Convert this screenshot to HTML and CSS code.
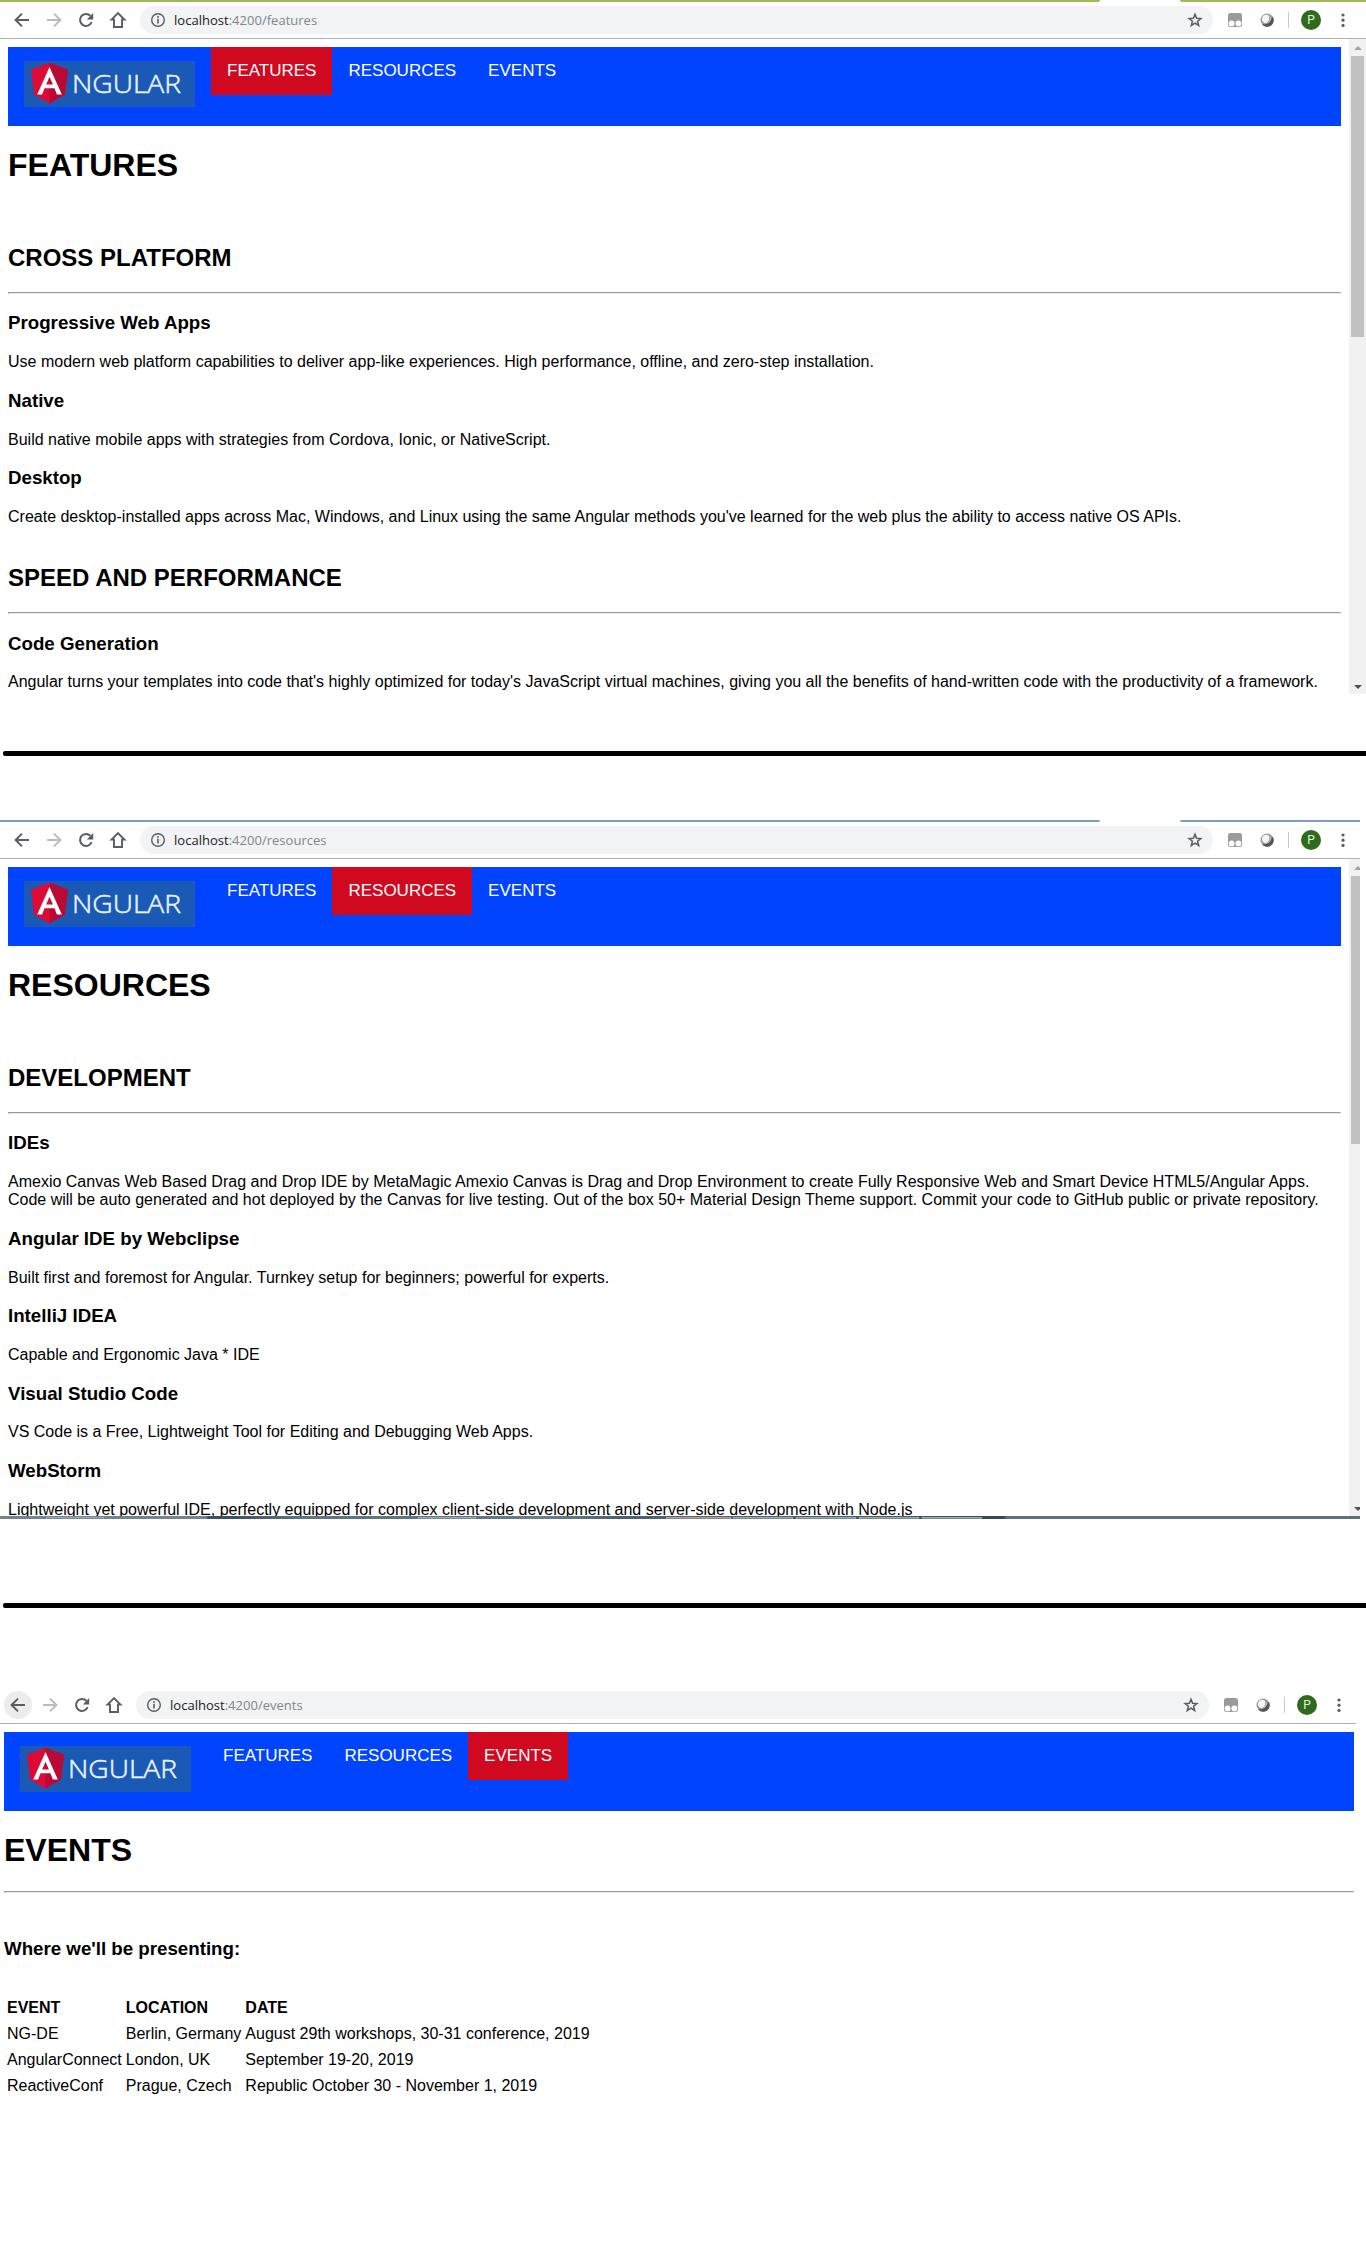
FILE: index.html
```html
<!DOCTYPE html>
<html lang="en">
<head>
<meta charset="utf-8">
<title>Angular</title>
<link rel="stylesheet" href="styles.css">
</head>
<body>
<svg class="defs" width="0" height="0">
  <defs>
    <symbol id="back" viewBox="0 0 28 28"><path d="M21 14H8M14 7.600L7.600 14l6.400 6.400" fill="none" stroke="currentColor" stroke-width="2"/></symbol>
    <symbol id="forward" viewBox="0 0 28 28"><path d="M7 14h13M14 7.600l6.400 6.400-6.400 6.400" fill="none" stroke="currentColor" stroke-width="2"/></symbol>
    <symbol id="reload" viewBox="0 0 28 28"><path d="M19.600 16.200A6 6 0 1 1 18.400 9.800" fill="none" stroke="currentColor" stroke-width="2"/><path d="M21.200 7v6.400h-6.400z" fill="currentColor"/></symbol>
    <symbol id="home" viewBox="0 0 28 28"><path d="M14 7.200L7.600 13.600H10V21h8v-7.400h2.400z" fill="none" stroke="currentColor" stroke-width="1.900"/></symbol>
    <symbol id="info" viewBox="0 0 28 28"><circle cx="14" cy="14" r="6.300" fill="none" stroke="currentColor" stroke-width="1.400"/><path d="M14 12.800v4.800M14 10v1.700" stroke="currentColor" stroke-width="1.600"/></symbol>
    <symbol id="star" viewBox="0 0 28 28"><path d="M14 8.200l1.600 4 4.300.300-3.300 2.800 1.100 4.200-3.700-2.300-3.700 2.300 1.100-4.200-3.300-2.800 4.300-.300z" fill="none" stroke="currentColor" stroke-width="1.500"/></symbol>
    <symbol id="mask" viewBox="0 0 28 28"><rect x="7" y="7" width="14" height="14" rx="2.500" fill="#9b9b9b"/><circle cx="10.600" cy="17.400" r="2.900" fill="#fff"/><circle cx="17.400" cy="17.400" r="2.900" fill="#fff"/></symbol>
    <symbol id="ball" viewBox="0 0 28 28"><circle cx="14" cy="14" r="6.500" fill="#999"/><path d="M19.500 10.500A6.500 6.500 0 0 1 9 18.200c5 .8 9-2.500 10.500-7.700z" fill="#555"/><circle cx="13.200" cy="13" r="4.300" fill="#f5f5f5"/><path d="M16 9.800a4.300 4.300 0 0 1-4 7.400c3-.4 4.700-3 4-7.400z" fill="#aaa"/></symbol>
    <symbol id="dots" viewBox="0 0 28 28"><g fill="currentColor"><circle cx="14" cy="9" r="1.600"/><circle cx="14" cy="14.200" r="1.600"/><circle cx="14" cy="19.400" r="1.600"/></g></symbol>
    <symbol id="logo" viewBox="0 0 171 46">
      <rect width="171" height="46" fill="#1a5ab4"/>
      <path d="M25.500 1.800L44 8.400l-3 25.200-15.500 8.800L10 33.600 7 8.400z" fill="#dd0a35"/>
      <path d="M25.500 1.800L44 8.400l-3 25.200-15.500 8.800z" fill="#b80a35"/>
      <path d="M25.500 6L13.200 33.500h4.900l2.400-6.200h10l2.400 6.200h4.900zm0 9.800l3.400 7.800h-6.800z" fill="#fff"/>
      <text x="48" y="32" class="logo-text" textLength="109" lengthAdjust="spacingAndGlyphs">NGULAR</text>
    </symbol>
  </defs>
</svg>

<section class="window window-features">
  <div class="tabstrip"><i></i><i></i></div>
  <div class="toolbar">
    <svg class="icon"><use href="#back"/></svg>
    <svg class="icon disabled"><use href="#forward"/></svg>
    <svg class="icon"><use href="#reload"/></svg>
    <svg class="icon"><use href="#home"/></svg>
    <div class="omnibox"><svg class="icon"><use href="#info"/></svg><span class="url">localhost<span>:4200/features</span></span><svg class="icon star"><use href="#star"/></svg></div>
    <svg class="icon"><use href="#mask"/></svg>
    <svg class="icon"><use href="#ball"/></svg>
    <div class="divider"></div>
    <div class="avatar">P</div>
    <svg class="icon"><use href="#dots"/></svg>
  </div>
  <div class="viewport">
    <main class="page">
      <nav class="nav"><svg class="logo"><use href="#logo"/></svg><a class="active">FEATURES</a><a>RESOURCES</a><a>EVENTS</a></nav>
      <h1>FEATURES</h1>
      <div class="group">
        <h2>CROSS PLATFORM</h2>
        <hr>
        <h3>Progressive Web Apps</h3>
        <p>Use modern web platform capabilities to deliver app-like experiences. High performance, offline, and zero-step installation.</p>
        <h3>Native</h3>
        <p>Build native mobile apps with strategies from Cordova, Ionic, or NativeScript.</p>
        <h3>Desktop</h3>
        <p>Create desktop-installed apps across Mac, Windows, and Linux using the same Angular methods you've learned for the web plus the ability to access native OS APIs.</p>
      </div>
      <div class="group">
        <h2>SPEED AND PERFORMANCE</h2>
        <hr>
        <h3>Code Generation</h3>
        <p>Angular turns your templates into code that's highly optimized for today's JavaScript virtual machines, giving you all the benefits of hand-written code with the productivity of a framework.</p>
      </div>
    </main>
    <div class="scrollbar"><b class="up"></b><div class="thumb"></div><b class="down"></b></div>
  </div>
</section>

<div class="separator first"></div>

<section class="window window-resources">
  <div class="tabstrip"><i></i><i></i></div>
  <div class="toolbar">
    <svg class="icon"><use href="#back"/></svg>
    <svg class="icon disabled"><use href="#forward"/></svg>
    <svg class="icon"><use href="#reload"/></svg>
    <svg class="icon"><use href="#home"/></svg>
    <div class="omnibox"><svg class="icon"><use href="#info"/></svg><span class="url">localhost<span>:4200/resources</span></span><svg class="icon star"><use href="#star"/></svg></div>
    <svg class="icon"><use href="#mask"/></svg>
    <svg class="icon"><use href="#ball"/></svg>
    <div class="divider"></div>
    <div class="avatar">P</div>
    <svg class="icon"><use href="#dots"/></svg>
  </div>
  <div class="viewport">
    <main class="page">
      <nav class="nav"><svg class="logo"><use href="#logo"/></svg><a>FEATURES</a><a class="active">RESOURCES</a><a>EVENTS</a></nav>
      <h1>RESOURCES</h1>
      <div class="group">
        <h2>DEVELOPMENT</h2>
        <hr>
        <h3>IDEs</h3>
        <p>Amexio Canvas Web Based Drag and Drop IDE by MetaMagic Amexio Canvas is Drag and Drop Environment to create Fully Responsive Web and Smart Device HTML5/Angular Apps.<br>Code will be auto generated and hot deployed by the Canvas for live testing. Out of the box 50+ Material Design Theme support. Commit your code to GitHub public or private repository.</p>
        <h3>Angular IDE by Webclipse</h3>
        <p>Built first and foremost for Angular. Turnkey setup for beginners; powerful for experts.</p>
        <h3>IntelliJ IDEA</h3>
        <p>Capable and Ergonomic Java * IDE</p>
        <h3>Visual Studio Code</h3>
        <p>VS Code is a Free, Lightweight Tool for Editing and Debugging Web Apps.</p>
        <h3>WebStorm</h3>
        <p>Lightweight yet powerful IDE, perfectly equipped for complex client-side development and server-side development with Node.js</p>
      </div>
    </main>
    <div class="scrollbar"><b class="up"></b><div class="thumb"></div><b class="down"></b></div>
  </div>
  <div class="taskbar"><i class="t1"></i><i class="t2"></i><i class="t3"></i><i class="t4"></i><i class="t4"></i><i class="t4"></i><i class="t4"></i></div>
</section>

<div class="separator second"></div>

<section class="window window-events">
  <div class="toolbar">
    <svg class="icon hover"><use href="#back"/></svg>
    <svg class="icon disabled"><use href="#forward"/></svg>
    <svg class="icon"><use href="#reload"/></svg>
    <svg class="icon"><use href="#home"/></svg>
    <div class="omnibox"><svg class="icon"><use href="#info"/></svg><span class="url">localhost<span>:4200/events</span></span><svg class="icon star"><use href="#star"/></svg></div>
    <svg class="icon"><use href="#mask"/></svg>
    <svg class="icon"><use href="#ball"/></svg>
    <div class="divider"></div>
    <div class="avatar">P</div>
    <svg class="icon"><use href="#dots"/></svg>
  </div>
  <div class="viewport">
    <main class="page">
      <nav class="nav"><svg class="logo"><use href="#logo"/></svg><a>FEATURES</a><a>RESOURCES</a><a class="active">EVENTS</a></nav>
      <h1>EVENTS</h1>
      <hr>
      <h3 class="presenting">Where we'll be presenting:</h3>
      <table>
        <tr><th>EVENT</th><th>LOCATION</th><th>DATE</th></tr>
        <tr><td>NG-DE</td><td>Berlin, Germany</td><td>August 29th workshops, 30-31 conference, 2019</td></tr>
        <tr><td>AngularConnect</td><td>London, UK</td><td>September 19-20, 2019</td></tr>
        <tr><td>ReactiveConf</td><td>Prague, Czech</td><td>Republic October 30 - November 1, 2019</td></tr>
      </table>
    </main>
  </div>
</section>
</body>
</html>
```

FILE: styles.css
```css
* { box-sizing: border-box; }
body {
  margin: 0;
  height: 2244px;
  overflow: hidden;
  background: #fff;
  color: #000;
  font: 16px "Liberation Sans", Arial, sans-serif;
}
.defs { display: block; }

.window { display: flex; flex-direction: column; overflow: hidden; }
.window-features { height: 694px; --tab: #9bbb59; }
.window-resources { height: 699px; width: 1360px; --tab: #7d9fbe; }
.window-events { height: 500px; width: 1356px; }

.tabstrip { height: 2px; display: flex; gap: 80px; flex: none; }
.tabstrip i { flex: none; background: var(--tab); width: 1100px; border-bottom-right-radius: 3px 2px; }
.tabstrip i + i { width: 200px; border-radius: 0 0 0 3px; }

.toolbar {
  flex: none;
  width: 1366px;
  height: 37px;
  padding: 4px 0 0 8px;
  border-bottom: 1px solid #b2b2b2;
  display: flex;
  gap: 4px;
  color: #5a5d61;
}
.icon { width: 28px; height: 28px; flex: none; }
.disabled { color: #bbb; }
.hover { background: #ececec; border-radius: 50%; }
.omnibox {
  width: 1073px;
  height: 28px;
  margin: 0 4px;
  padding: 0 4px;
  border-radius: 14px;
  background: #f1f3f4;
  display: flex;
  align-items: center;
}
.url {
  margin-left: 2px;
  font: 13px/28px "Open Sans", sans-serif;
  letter-spacing: 0.02px;
  color: #202124;
}
.url span { color: #80868b; }
.star { margin-left: auto; }
.divider { width: 1px; height: 16px; margin: 6px 8px 0 3px; background: #c9c9c9; }
.avatar {
  width: 20px;
  height: 20px;
  margin: 4px 4px 0 0;
  border-radius: 50%;
  background: #2f6b1c;
  color: #e4f3df;
  font: 12px/20px Roboto, sans-serif;
  text-align: center;
}

.viewport { flex: 1; min-height: 0; display: flex; width: 1366px; overflow: hidden; }
.page { flex: none; width: 1349px; padding: 8px; }
.nav { height: 79px; padding-left: 16px; display: flex; background: #04f; }
.logo { width: 171px; height: 46px; margin: 14px 16px 0 0; }
.logo-text { font: 300 25px "Open Sans", sans-serif; fill: #e9f3ff; stroke: #e9f3ff; stroke-width: 0.5px; }
.nav a {
  height: 48px;
  padding: 14px 16px 0;
  font-size: 17px;
  line-height: 20px;
  color: #fff;
}
.nav .active { background: #d10920; }

h1 { margin: 21.44px 0; font-size: 32px; line-height: 37px; }
h2 { margin: 19.92px 0; font-size: 24px; line-height: 28px; }
h3 { margin: 18.72px 0; font-size: 18.72px; line-height: 22px; }
p { margin: 0; line-height: 18px; white-space: nowrap; }
hr { height: 2px; margin: 8px 0; border: 1px solid #9a9a9a; border-bottom-color: #e9e9e9; border-right-color: #e9e9e9; }
.group { padding-top: 18px; }

.scrollbar {
  width: 17px;
  background: #f1f1f1;
  display: flex;
  flex-direction: column;
  align-items: center;
}
.scrollbar b { border: 4px solid transparent; border-top: 0; }
.up { margin: 7px 0 6px; border-bottom-color: #a3a3a3 !important; }
.down { margin: auto 0 5px; transform: rotate(180deg); border-bottom-color: #505050 !important; }
.thumb { width: 13px; height: 281px; background: #c1c1c1; }
.window-resources .thumb { height: 268px; }

.taskbar {
  flex: none;
  height: 3px;
  padding: 1px 0 0 46px;
  display: flex;
  background: linear-gradient(90deg, #71858f 0 206px, #3d5260 208px 235px, #5d7581 300px 480px, #6b818d 540px, #4a606c 620px, #50666e 700px, #465963 920px, #364751 1004px, #5b7080 1006px);
}
.taskbar i { border: 1px solid #9cabad; border-bottom: 0; background: #778b91; }
.t1 { width: 58px; margin-right: 314px; }
.t2 { width: 58px; margin-right: 190px; }
.t3 { width: 65px; margin-right: 2px; background: #a27a7a !important; }
.t4 { width: 60px; margin-right: 3px; }

.separator { height: 5px; margin-left: 3px; background: #000; border-radius: 2px 0 0 2px; }
.first { margin-top: 57px; margin-bottom: 64px; }
.second { margin-top: 84px; margin-bottom: 79px; }

.window-events .toolbar, .window-events .viewport { margin-left: -4px; }
.window-events .page { width: 1366px; }
.presenting { margin-top: 44.7px; margin-bottom: 34px; }
table { border-spacing: 2px; margin-top: 0; }
th, td { padding: 3px 1px; line-height: 18px; text-align: left; white-space: nowrap; }
```
